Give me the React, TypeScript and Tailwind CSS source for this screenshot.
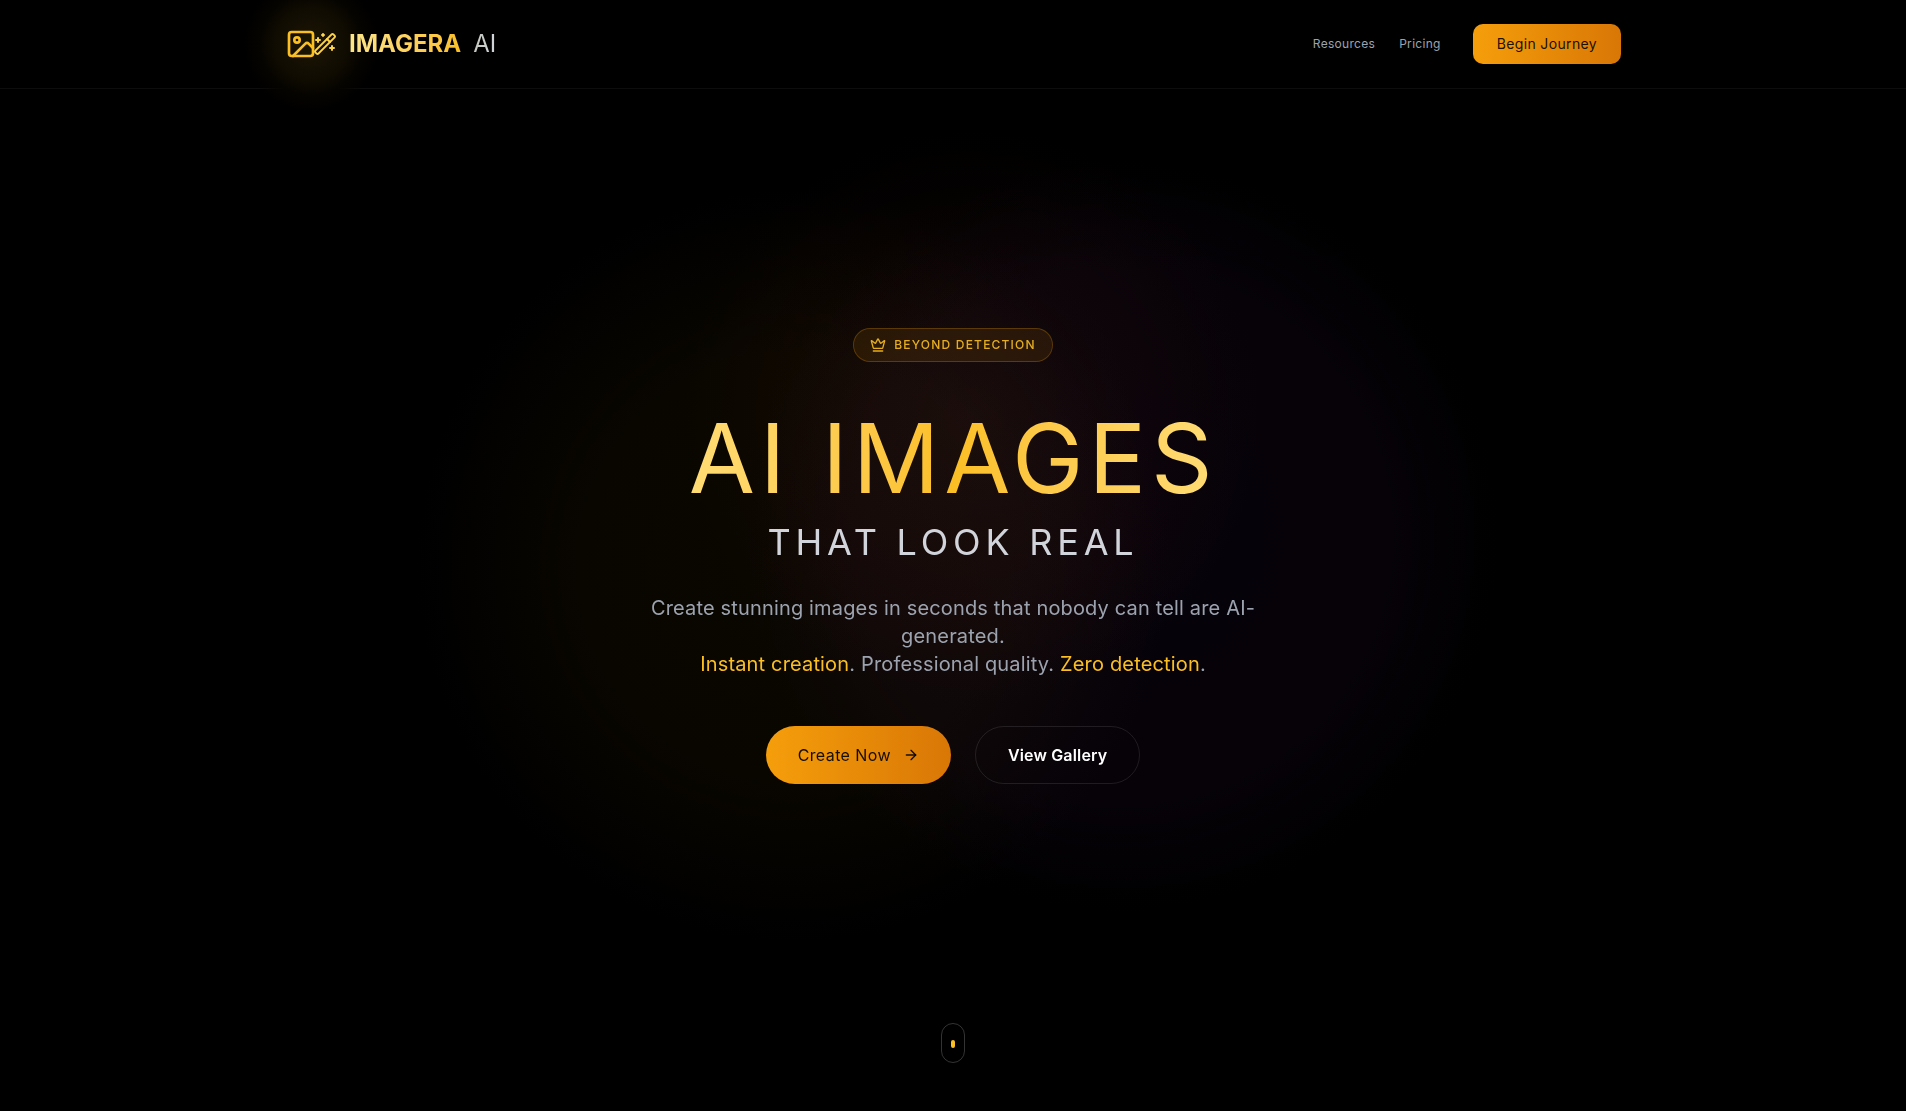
import React from "react";
import { ArrowRight } from "lucide-react";

const ImageIcon = () => (
  <svg className="size-8 shrink-0" viewBox="0 0 24 24" fill="none" stroke="#fbbf24" strokeWidth="2" strokeLinecap="round" strokeLinejoin="round" aria-hidden="true">
    <rect x="3" y="3" width="18" height="18" rx="2" />
    <circle cx="9" cy="9" r="2" />
    <path d="m21 15-3.086-3.086a2 2 0 0 0-2.828 0L6 21" />
  </svg>
);

const WandIcon = () => (
  <svg className="size-6 shrink-0" viewBox="0 0 24 24" fill="none" stroke="#fcd34d" strokeWidth="2" strokeLinecap="round" strokeLinejoin="round" aria-hidden="true">
    <path d="m21.64 3.64-1.28-1.28a1.21 1.21 0 0 0-1.72 0L2.36 18.64a1.21 1.21 0 0 0 0 1.72l1.28 1.28a1.2 1.2 0 0 0 1.72 0L21.64 5.36a1.2 1.2 0 0 0 0-1.72" />
    <path d="m14 7 3 3M5 6v4M19 14v4M10 2v2M7 8H3M21 16h-4M11 3H9" />
  </svg>
);

const CrownIcon = () => (
  <svg className="size-4 shrink-0" viewBox="0 0 24 24" fill="none" stroke="currentColor" strokeWidth="2" strokeLinecap="round" strokeLinejoin="round" aria-hidden="true">
    <path d="M11.562 3.266a.5.5 0 0 1 .876 0L15.39 8.87a1 1 0 0 0 1.516.294L21.183 5.5a.5.5 0 0 1 .798.519l-2.834 10.246a1 1 0 0 1-.956.734H5.81a1 1 0 0 1-.957-.734L2.02 6.02a.5.5 0 0 1 .798-.519l4.276 3.664a1 1 0 0 0 1.516-.294z" />
    <path d="M5 21h14" />
  </svg>
);

export default function App() {
  return (
    <div className="relative flex min-h-screen flex-col overflow-hidden bg-black font-['Inter',sans-serif] tracking-[0.01em] text-white">
      <div className="pointer-events-none absolute inset-0" aria-hidden="true">
        <div className="absolute top-1/2 left-1/2 size-[760px] -translate-x-[540px] -translate-y-[370px] rounded-full bg-[radial-gradient(circle,#0a0600_0%,#090600_40%,transparent_70%)]" />
        <div className="absolute top-1/2 left-1/2 size-[760px] -translate-x-[210px] -translate-y-[400px] rounded-full bg-[radial-gradient(circle,#07020a_0%,#060208_50%,transparent_70%)] mix-blend-screen" />
        <div className="absolute top-1/2 left-1/2 size-[580px] -translate-x-[270px] -translate-y-[430px] rounded-full bg-[radial-gradient(circle,#0d0603_0%,#060201_45%,transparent_70%)] mix-blend-screen" />
      </div>

      <header className="relative border-b border-white/5 bg-black">
        <div className="mx-auto flex h-22 max-w-[1400px] items-center justify-between px-8">
          <a href="#" className="flex items-center gap-3">
            <span className="relative flex items-center">
              <span className="pointer-events-none absolute top-1/2 left-1/2 size-36 -translate-1/2 bg-[radial-gradient(circle,#1c1603_0%,#100c02_35%,#060400_50%,transparent_66%)]" />
              <span className="relative flex items-center">
                <ImageIcon />
                <span className="-ml-1 flex"><WandIcon /></span>
              </span>
            </span>
            <span className="relative flex items-center gap-3 text-2xl tracking-normal">
              <span className="bg-linear-to-r from-[#fde68a] to-[#fbbf24] bg-clip-text font-bold text-transparent">IMAGERA</span>
              <span className="bg-linear-to-r from-[#c4c8bd] to-[#d1d5db] bg-clip-text text-transparent">AI</span>
            </span>
          </a>
          <nav className="flex items-center gap-6 text-xs tracking-wide text-[#9ca3af]">
            <a href="#resources">Resources</a>
            <a href="#pricing">Pricing</a>
            <button className="ml-2 h-10 rounded-[10px] bg-linear-to-r from-[#f59e0b] to-[#d97706] px-6 text-sm tracking-wide text-black/90">Begin Journey</button>
          </nav>
        </div>
      </header>

      <main className="relative flex flex-1 flex-col items-center px-6 pt-[239px] text-center">
        <div className="flex h-[34px] items-center gap-2 rounded-full border border-[#f59e0b]/25 bg-[#f59e0b]/10 px-4 text-xs font-medium tracking-widest text-[#fbbf24]/90">
          <CrownIcon />
          <span>BEYOND DETECTION</span>
        </div>
        <h1 className="mt-12 flex flex-col items-center text-8xl tracking-wider">
          <span className="bg-linear-to-r from-[#ffdc74] via-[#fbbf24] to-[#ffdc74] bg-clip-text text-transparent">AI IMAGES</span>
          <span className="mt-4 text-4xl text-[#d1d5db]">THAT LOOK REAL</span>
        </h1>
        <p className="mt-8 max-w-2xl text-xl leading-7 text-[#9ca3af]">
          Create stunning images in seconds that nobody can tell are AI-generated.
          <br />
          <span className="text-[#fbbf24]">Instant creation</span>. Professional quality. <span className="text-[#fbbf24]">Zero detection</span>.
        </p>
        <div className="mt-12 flex items-center gap-6">
          <button className="flex h-[58px] items-center gap-3 rounded-full bg-linear-to-r from-[#f59e0b] to-[#d97706] px-8 tracking-wide text-black/90">
            Create Now
            <ArrowRight className="size-4" aria-hidden="true" />
          </button>
          <button className="h-[58px] rounded-full border border-white/10 px-8 font-semibold tracking-[0.01em]">View Gallery</button>
        </div>
        <div className="mt-auto mb-12 flex h-10 w-6 justify-center rounded-full border border-white/20 pt-4" aria-hidden="true">
          <span className="h-2 w-1 rounded-full bg-[#fbbf24]" />
        </div>
      </main>
    </div>
  );
}
